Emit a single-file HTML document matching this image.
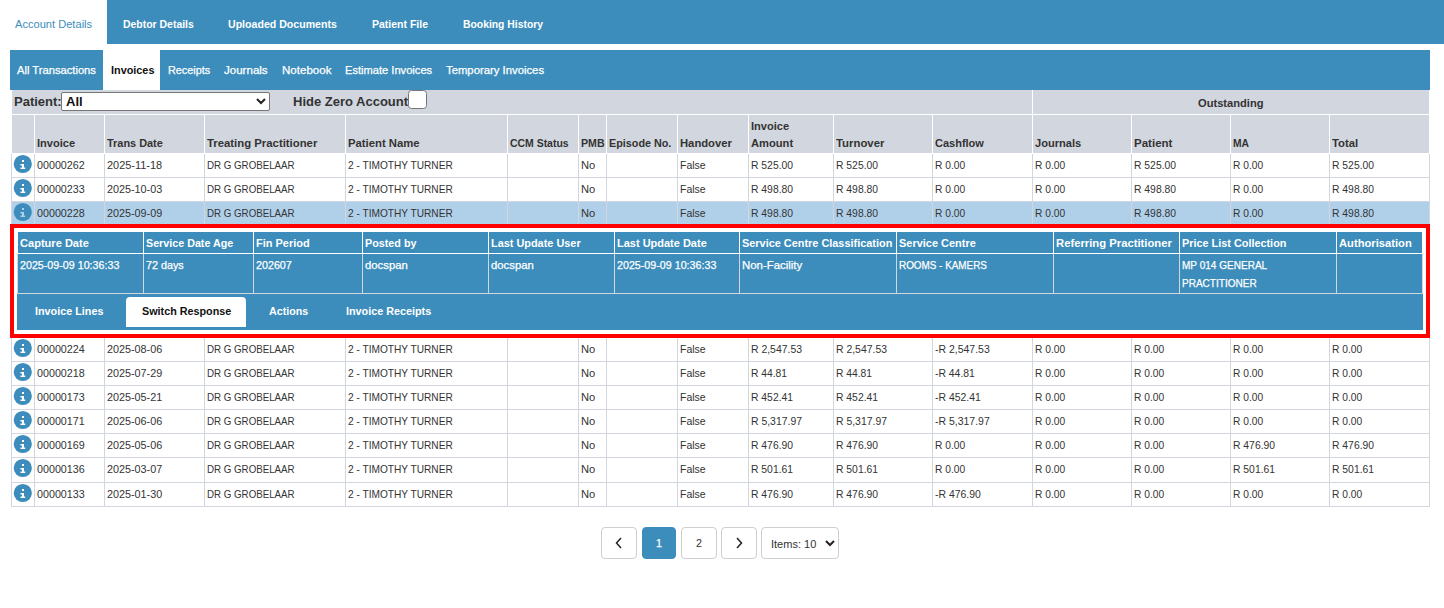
<!DOCTYPE html>
<html><head><meta charset="utf-8"><style>
html,body{margin:0;padding:0;background:#fff;}
body{width:1444px;height:608px;position:relative;overflow:hidden;font-family:"Liberation Sans",sans-serif;}
body>div,body>svg{position:absolute;}
.t{white-space:nowrap;transform-origin:0 0;}
</style></head><body>
<div style="left:107px;top:0px;width:1337px;height:44px;background:#3c8dbc;"></div>
<div class="t" style="left:15.00px;top:18.69px;font-size:11.0px;line-height:11.0px;font-weight:normal;color:#3c8dbc;transform:scaleX(1.0089)">Account Details</div>
<div class="t" style="left:122.50px;top:18.69px;font-size:11.0px;line-height:11.0px;font-weight:bold;color:#fff;transform:scaleX(0.9497)">Debtor Details</div>
<div class="t" style="left:228.00px;top:18.69px;font-size:11.0px;line-height:11.0px;font-weight:bold;color:#fff;transform:scaleX(0.9625)">Uploaded Documents</div>
<div class="t" style="left:372.00px;top:18.69px;font-size:11.0px;line-height:11.0px;font-weight:bold;color:#fff;transform:scaleX(0.9549)">Patient File</div>
<div class="t" style="left:462.80px;top:18.69px;font-size:11.0px;line-height:11.0px;font-weight:bold;color:#fff;transform:scaleX(0.9417)">Booking History</div>
<div style="left:10px;top:50px;width:1420px;height:40px;background:#3c8dbc;"></div>
<div style="left:103px;top:50px;width:57px;height:40px;background:#fff;"></div>
<div class="t" style="left:17.00px;top:64.69px;font-size:11.0px;line-height:11.0px;font-weight:normal;color:#fff;transform:scaleX(1.0166);-webkit-text-stroke:0.25px #fff">All Transactions</div>
<div class="t" style="left:110.50px;top:64.69px;font-size:11.0px;line-height:11.0px;font-weight:bold;color:#111;transform:scaleX(0.9868)">Invoices</div>
<div class="t" style="left:167.50px;top:64.69px;font-size:11.0px;line-height:11.0px;font-weight:normal;color:#fff;transform:scaleX(0.9860);-webkit-text-stroke:0.25px #fff">Receipts</div>
<div class="t" style="left:223.80px;top:64.69px;font-size:11.0px;line-height:11.0px;font-weight:normal;color:#fff;transform:scaleX(1.0497);-webkit-text-stroke:0.25px #fff">Journals</div>
<div class="t" style="left:281.50px;top:64.69px;font-size:11.0px;line-height:11.0px;font-weight:normal;color:#fff;transform:scaleX(1.0510);-webkit-text-stroke:0.25px #fff">Notebook</div>
<div class="t" style="left:345.00px;top:64.69px;font-size:11.0px;line-height:11.0px;font-weight:normal;color:#fff;transform:scaleX(1.0108);-webkit-text-stroke:0.25px #fff">Estimate Invoices</div>
<div class="t" style="left:446.00px;top:64.69px;font-size:11.0px;line-height:11.0px;font-weight:normal;color:#fff;transform:scaleX(1.0280);-webkit-text-stroke:0.25px #fff">Temporary Invoices</div>
<div style="left:12px;top:90px;width:1417px;height:63px;background:#d2d6de;"></div>
<div style="left:12px;top:114px;width:1417px;height:1px;background:#fff;"></div>
<div style="left:1032px;top:90px;width:1px;height:24px;background:#fff;"></div>
<div style="left:34px;top:115px;width:1px;height:38px;background:#fff;"></div>
<div style="left:104px;top:115px;width:1px;height:38px;background:#fff;"></div>
<div style="left:204px;top:115px;width:1px;height:38px;background:#fff;"></div>
<div style="left:345px;top:115px;width:1px;height:38px;background:#fff;"></div>
<div style="left:507px;top:115px;width:1px;height:38px;background:#fff;"></div>
<div style="left:578px;top:115px;width:1px;height:38px;background:#fff;"></div>
<div style="left:606px;top:115px;width:1px;height:38px;background:#fff;"></div>
<div style="left:677px;top:115px;width:1px;height:38px;background:#fff;"></div>
<div style="left:748px;top:115px;width:1px;height:38px;background:#fff;"></div>
<div style="left:833px;top:115px;width:1px;height:38px;background:#fff;"></div>
<div style="left:932px;top:115px;width:1px;height:38px;background:#fff;"></div>
<div style="left:1032px;top:115px;width:1px;height:38px;background:#fff;"></div>
<div style="left:1131px;top:115px;width:1px;height:38px;background:#fff;"></div>
<div style="left:1230px;top:115px;width:1px;height:38px;background:#fff;"></div>
<div style="left:1329px;top:115px;width:1px;height:38px;background:#fff;"></div>
<div class="t" style="left:14px;top:94px;font-size:13px;line-height:15px;font-weight:bold;color:#333">Patient:</div>
<div style="left:61px;top:92px;width:209px;height:19px;background:#fff;box-sizing:border-box;border:1px solid #767676;border-radius:2px;"></div>
<div class="t" style="left:66px;top:94px;font-size:13px;line-height:15px;font-weight:bold;color:#111">All</div>
<svg style="position:absolute;left:255px;top:97px" width="12" height="9" viewBox="0 0 12 9"><path d="M2 2 L6 6 L10 2" fill="none" stroke="#222" stroke-width="2"/></svg>
<div class="t" style="left:293px;top:94px;font-size:13px;line-height:15px;font-weight:bold;color:#333">Hide Zero Account</div>
<div style="left:408px;top:90px;width:19px;height:19px;background:#fff;box-sizing:border-box;border:1.8px solid #767676;border-radius:3.5px;"></div>
<div class="t" style="left:1197.71px;top:97.59px;font-size:11.0px;line-height:11.0px;font-weight:bold;color:#333;transform:scaleX(1.0124)">Outstanding</div>
<div class="t" style="left:37.00px;top:137.69px;font-size:11.0px;line-height:11.0px;font-weight:bold;color:#333;transform:scaleX(1.0059)">Invoice</div>
<div class="t" style="left:107.00px;top:137.69px;font-size:11.0px;line-height:11.0px;font-weight:bold;color:#333;transform:scaleX(0.9926)">Trans Date</div>
<div class="t" style="left:207.00px;top:137.69px;font-size:11.0px;line-height:11.0px;font-weight:bold;color:#333;transform:scaleX(1.0314)">Treating Practitioner</div>
<div class="t" style="left:348.00px;top:137.69px;font-size:11.0px;line-height:11.0px;font-weight:bold;color:#333;transform:scaleX(1.0280)">Patient Name</div>
<div class="t" style="left:510.00px;top:137.69px;font-size:11.0px;line-height:11.0px;font-weight:bold;color:#333;transform:scaleX(0.9491)">CCM Status</div>
<div class="t" style="left:581.00px;top:137.69px;font-size:11.0px;line-height:11.0px;font-weight:bold;color:#333;transform:scaleX(0.9637)">PMB</div>
<div class="t" style="left:609.00px;top:137.69px;font-size:11.0px;line-height:11.0px;font-weight:bold;color:#333;transform:scaleX(0.9809)">Episode No.</div>
<div class="t" style="left:680.00px;top:137.69px;font-size:11.0px;line-height:11.0px;font-weight:bold;color:#333;transform:scaleX(1.0226)">Handover</div>
<div class="t" style="left:751.00px;top:120.69px;font-size:11.0px;line-height:11.0px;font-weight:bold;color:#333;transform:scaleX(1.0059)">Invoice</div>
<div class="t" style="left:751.00px;top:137.69px;font-size:11.0px;line-height:11.0px;font-weight:bold;color:#333;transform:scaleX(1.0132)">Amount</div>
<div class="t" style="left:836.00px;top:137.69px;font-size:11.0px;line-height:11.0px;font-weight:bold;color:#333;transform:scaleX(1.0320)">Turnover</div>
<div class="t" style="left:935.00px;top:137.69px;font-size:11.0px;line-height:11.0px;font-weight:bold;color:#333;transform:scaleX(0.9996)">Cashflow</div>
<div class="t" style="left:1035.00px;top:137.69px;font-size:11.0px;line-height:11.0px;font-weight:bold;color:#333;transform:scaleX(1.0098)">Journals</div>
<div class="t" style="left:1134.00px;top:137.69px;font-size:11.0px;line-height:11.0px;font-weight:bold;color:#333;transform:scaleX(1.0481)">Patient</div>
<div class="t" style="left:1233.00px;top:137.69px;font-size:11.0px;line-height:11.0px;font-weight:bold;color:#333;transform:scaleX(0.9364)">MA</div>
<div class="t" style="left:1332.00px;top:137.69px;font-size:11.0px;line-height:11.0px;font-weight:bold;color:#333;transform:scaleX(1.0294)">Total</div>
<div style="left:11px;top:177px;width:1419px;height:1px;background:#d2d6de;"></div>
<div style="left:11px;top:154px;width:1px;height:24px;background:#d2d6de;"></div>
<div style="left:34px;top:154px;width:1px;height:24px;background:#d2d6de;"></div>
<div style="left:104px;top:154px;width:1px;height:24px;background:#d2d6de;"></div>
<div style="left:204px;top:154px;width:1px;height:24px;background:#d2d6de;"></div>
<div style="left:345px;top:154px;width:1px;height:24px;background:#d2d6de;"></div>
<div style="left:507px;top:154px;width:1px;height:24px;background:#d2d6de;"></div>
<div style="left:578px;top:154px;width:1px;height:24px;background:#d2d6de;"></div>
<div style="left:606px;top:154px;width:1px;height:24px;background:#d2d6de;"></div>
<div style="left:677px;top:154px;width:1px;height:24px;background:#d2d6de;"></div>
<div style="left:748px;top:154px;width:1px;height:24px;background:#d2d6de;"></div>
<div style="left:833px;top:154px;width:1px;height:24px;background:#d2d6de;"></div>
<div style="left:932px;top:154px;width:1px;height:24px;background:#d2d6de;"></div>
<div style="left:1032px;top:154px;width:1px;height:24px;background:#d2d6de;"></div>
<div style="left:1131px;top:154px;width:1px;height:24px;background:#d2d6de;"></div>
<div style="left:1230px;top:154px;width:1px;height:24px;background:#d2d6de;"></div>
<div style="left:1329px;top:154px;width:1px;height:24px;background:#d2d6de;"></div>
<div style="left:1429px;top:154px;width:1px;height:24px;background:#d2d6de;"></div>
<svg style="position:absolute;left:13px;top:154px" width="20" height="20" viewBox="0 0 20 20"><circle cx="9.8" cy="10" r="9.1" fill="#3c8dbc"/><rect x="9" y="6" width="2" height="2" fill="#fff"/><path d="M7.5 10 H11 V13.5 H12.2 V15 H7.5 V13.5 H9 V11.5 H7.5 Z" fill="#fff"/></svg>
<div class="t" style="left:37.00px;top:159.69px;font-size:11.0px;line-height:11.0px;font-weight:normal;color:#333;transform:scaleX(0.9749)">00000262</div>
<div class="t" style="left:107.00px;top:159.69px;font-size:11.0px;line-height:11.0px;font-weight:normal;color:#333;transform:scaleX(0.9951)">2025-11-18</div>
<div class="t" style="left:207.00px;top:159.69px;font-size:11.0px;line-height:11.0px;font-weight:normal;color:#333;transform:scaleX(0.8850)">DR G GROBELAAR</div>
<div class="t" style="left:348.00px;top:159.69px;font-size:11.0px;line-height:11.0px;font-weight:normal;color:#333;transform:scaleX(0.9217)">2 - TIMOTHY TURNER</div>
<div class="t" style="left:581.00px;top:159.69px;font-size:11.0px;line-height:11.0px;font-weight:normal;color:#333;transform:scaleX(1.0147)">No</div>
<div class="t" style="left:680.00px;top:159.69px;font-size:11.0px;line-height:11.0px;font-weight:normal;color:#333;transform:scaleX(0.9521)">False</div>
<div class="t" style="left:751.00px;top:159.69px;font-size:11.0px;line-height:11.0px;font-weight:normal;color:#333;transform:scaleX(0.9416)">R 525.00</div>
<div class="t" style="left:836.00px;top:159.69px;font-size:11.0px;line-height:11.0px;font-weight:normal;color:#333;transform:scaleX(0.9416)">R 525.00</div>
<div class="t" style="left:935.00px;top:159.69px;font-size:11.0px;line-height:11.0px;font-weight:normal;color:#333;transform:scaleX(0.9290)">R 0.00</div>
<div class="t" style="left:1035.00px;top:159.69px;font-size:11.0px;line-height:11.0px;font-weight:normal;color:#333;transform:scaleX(0.9290)">R 0.00</div>
<div class="t" style="left:1134.00px;top:159.69px;font-size:11.0px;line-height:11.0px;font-weight:normal;color:#333;transform:scaleX(0.9416)">R 525.00</div>
<div class="t" style="left:1233.00px;top:159.69px;font-size:11.0px;line-height:11.0px;font-weight:normal;color:#333;transform:scaleX(0.9290)">R 0.00</div>
<div class="t" style="left:1332.00px;top:159.69px;font-size:11.0px;line-height:11.0px;font-weight:normal;color:#333;transform:scaleX(0.9416)">R 525.00</div>
<div style="left:11px;top:201px;width:1419px;height:1px;background:#d2d6de;"></div>
<div style="left:11px;top:177px;width:1px;height:25px;background:#d2d6de;"></div>
<div style="left:34px;top:177px;width:1px;height:25px;background:#d2d6de;"></div>
<div style="left:104px;top:177px;width:1px;height:25px;background:#d2d6de;"></div>
<div style="left:204px;top:177px;width:1px;height:25px;background:#d2d6de;"></div>
<div style="left:345px;top:177px;width:1px;height:25px;background:#d2d6de;"></div>
<div style="left:507px;top:177px;width:1px;height:25px;background:#d2d6de;"></div>
<div style="left:578px;top:177px;width:1px;height:25px;background:#d2d6de;"></div>
<div style="left:606px;top:177px;width:1px;height:25px;background:#d2d6de;"></div>
<div style="left:677px;top:177px;width:1px;height:25px;background:#d2d6de;"></div>
<div style="left:748px;top:177px;width:1px;height:25px;background:#d2d6de;"></div>
<div style="left:833px;top:177px;width:1px;height:25px;background:#d2d6de;"></div>
<div style="left:932px;top:177px;width:1px;height:25px;background:#d2d6de;"></div>
<div style="left:1032px;top:177px;width:1px;height:25px;background:#d2d6de;"></div>
<div style="left:1131px;top:177px;width:1px;height:25px;background:#d2d6de;"></div>
<div style="left:1230px;top:177px;width:1px;height:25px;background:#d2d6de;"></div>
<div style="left:1329px;top:177px;width:1px;height:25px;background:#d2d6de;"></div>
<div style="left:1429px;top:177px;width:1px;height:25px;background:#d2d6de;"></div>
<svg style="position:absolute;left:13px;top:178px" width="20" height="20" viewBox="0 0 20 20"><circle cx="9.8" cy="10" r="9.1" fill="#3c8dbc"/><rect x="9" y="6" width="2" height="2" fill="#fff"/><path d="M7.5 10 H11 V13.5 H12.2 V15 H7.5 V13.5 H9 V11.5 H7.5 Z" fill="#fff"/></svg>
<div class="t" style="left:37.00px;top:183.69px;font-size:11.0px;line-height:11.0px;font-weight:normal;color:#333;transform:scaleX(0.9749)">00000233</div>
<div class="t" style="left:107.00px;top:183.69px;font-size:11.0px;line-height:11.0px;font-weight:normal;color:#333;transform:scaleX(0.9806)">2025-10-03</div>
<div class="t" style="left:207.00px;top:183.69px;font-size:11.0px;line-height:11.0px;font-weight:normal;color:#333;transform:scaleX(0.8850)">DR G GROBELAAR</div>
<div class="t" style="left:348.00px;top:183.69px;font-size:11.0px;line-height:11.0px;font-weight:normal;color:#333;transform:scaleX(0.9217)">2 - TIMOTHY TURNER</div>
<div class="t" style="left:581.00px;top:183.69px;font-size:11.0px;line-height:11.0px;font-weight:normal;color:#333;transform:scaleX(1.0147)">No</div>
<div class="t" style="left:680.00px;top:183.69px;font-size:11.0px;line-height:11.0px;font-weight:normal;color:#333;transform:scaleX(0.9521)">False</div>
<div class="t" style="left:751.00px;top:183.69px;font-size:11.0px;line-height:11.0px;font-weight:normal;color:#333;transform:scaleX(0.9416)">R 498.80</div>
<div class="t" style="left:836.00px;top:183.69px;font-size:11.0px;line-height:11.0px;font-weight:normal;color:#333;transform:scaleX(0.9416)">R 498.80</div>
<div class="t" style="left:935.00px;top:183.69px;font-size:11.0px;line-height:11.0px;font-weight:normal;color:#333;transform:scaleX(0.9290)">R 0.00</div>
<div class="t" style="left:1035.00px;top:183.69px;font-size:11.0px;line-height:11.0px;font-weight:normal;color:#333;transform:scaleX(0.9290)">R 0.00</div>
<div class="t" style="left:1134.00px;top:183.69px;font-size:11.0px;line-height:11.0px;font-weight:normal;color:#333;transform:scaleX(0.9416)">R 498.80</div>
<div class="t" style="left:1233.00px;top:183.69px;font-size:11.0px;line-height:11.0px;font-weight:normal;color:#333;transform:scaleX(0.9290)">R 0.00</div>
<div class="t" style="left:1332.00px;top:183.69px;font-size:11.0px;line-height:11.0px;font-weight:normal;color:#333;transform:scaleX(0.9416)">R 498.80</div>
<div style="left:12px;top:202px;width:1417px;height:23px;background:#b0d0ea;"></div>
<div style="left:11px;top:225px;width:1419px;height:1px;background:#d2d6de;"></div>
<div style="left:11px;top:201px;width:1px;height:25px;background:#d2d6de;"></div>
<div style="left:34px;top:201px;width:1px;height:25px;background:#d2d6de;"></div>
<div style="left:104px;top:201px;width:1px;height:25px;background:#d2d6de;"></div>
<div style="left:204px;top:201px;width:1px;height:25px;background:#d2d6de;"></div>
<div style="left:345px;top:201px;width:1px;height:25px;background:#d2d6de;"></div>
<div style="left:507px;top:201px;width:1px;height:25px;background:#d2d6de;"></div>
<div style="left:578px;top:201px;width:1px;height:25px;background:#d2d6de;"></div>
<div style="left:606px;top:201px;width:1px;height:25px;background:#d2d6de;"></div>
<div style="left:677px;top:201px;width:1px;height:25px;background:#d2d6de;"></div>
<div style="left:748px;top:201px;width:1px;height:25px;background:#d2d6de;"></div>
<div style="left:833px;top:201px;width:1px;height:25px;background:#d2d6de;"></div>
<div style="left:932px;top:201px;width:1px;height:25px;background:#d2d6de;"></div>
<div style="left:1032px;top:201px;width:1px;height:25px;background:#d2d6de;"></div>
<div style="left:1131px;top:201px;width:1px;height:25px;background:#d2d6de;"></div>
<div style="left:1230px;top:201px;width:1px;height:25px;background:#d2d6de;"></div>
<div style="left:1329px;top:201px;width:1px;height:25px;background:#d2d6de;"></div>
<div style="left:1429px;top:201px;width:1px;height:25px;background:#d2d6de;"></div>
<svg style="position:absolute;left:13px;top:202px" width="20" height="20" viewBox="0 0 20 20"><circle cx="9.8" cy="10" r="9.1" fill="#3c8dbc"/><rect x="9" y="6" width="2" height="2" fill="#b0d0ea"/><path d="M7.5 10 H11 V13.5 H12.2 V15 H7.5 V13.5 H9 V11.5 H7.5 Z" fill="#b0d0ea"/></svg>
<div class="t" style="left:37.00px;top:207.69px;font-size:11.0px;line-height:11.0px;font-weight:normal;color:#333;transform:scaleX(0.9749)">00000228</div>
<div class="t" style="left:107.00px;top:207.69px;font-size:11.0px;line-height:11.0px;font-weight:normal;color:#333;transform:scaleX(0.9806)">2025-09-09</div>
<div class="t" style="left:207.00px;top:207.69px;font-size:11.0px;line-height:11.0px;font-weight:normal;color:#333;transform:scaleX(0.8850)">DR G GROBELAAR</div>
<div class="t" style="left:348.00px;top:207.69px;font-size:11.0px;line-height:11.0px;font-weight:normal;color:#333;transform:scaleX(0.9217)">2 - TIMOTHY TURNER</div>
<div class="t" style="left:581.00px;top:207.69px;font-size:11.0px;line-height:11.0px;font-weight:normal;color:#333;transform:scaleX(1.0147)">No</div>
<div class="t" style="left:680.00px;top:207.69px;font-size:11.0px;line-height:11.0px;font-weight:normal;color:#333;transform:scaleX(0.9521)">False</div>
<div class="t" style="left:751.00px;top:207.69px;font-size:11.0px;line-height:11.0px;font-weight:normal;color:#333;transform:scaleX(0.9416)">R 498.80</div>
<div class="t" style="left:836.00px;top:207.69px;font-size:11.0px;line-height:11.0px;font-weight:normal;color:#333;transform:scaleX(0.9416)">R 498.80</div>
<div class="t" style="left:935.00px;top:207.69px;font-size:11.0px;line-height:11.0px;font-weight:normal;color:#333;transform:scaleX(0.9290)">R 0.00</div>
<div class="t" style="left:1035.00px;top:207.69px;font-size:11.0px;line-height:11.0px;font-weight:normal;color:#333;transform:scaleX(0.9290)">R 0.00</div>
<div class="t" style="left:1134.00px;top:207.69px;font-size:11.0px;line-height:11.0px;font-weight:normal;color:#333;transform:scaleX(0.9416)">R 498.80</div>
<div class="t" style="left:1233.00px;top:207.69px;font-size:11.0px;line-height:11.0px;font-weight:normal;color:#333;transform:scaleX(0.9290)">R 0.00</div>
<div class="t" style="left:1332.00px;top:207.69px;font-size:11.0px;line-height:11.0px;font-weight:normal;color:#333;transform:scaleX(0.9416)">R 498.80</div>
<div style="left:11px;top:361px;width:1419px;height:1px;background:#d2d6de;"></div>
<div style="left:11px;top:337px;width:1px;height:25px;background:#d2d6de;"></div>
<div style="left:34px;top:337px;width:1px;height:25px;background:#d2d6de;"></div>
<div style="left:104px;top:337px;width:1px;height:25px;background:#d2d6de;"></div>
<div style="left:204px;top:337px;width:1px;height:25px;background:#d2d6de;"></div>
<div style="left:345px;top:337px;width:1px;height:25px;background:#d2d6de;"></div>
<div style="left:507px;top:337px;width:1px;height:25px;background:#d2d6de;"></div>
<div style="left:578px;top:337px;width:1px;height:25px;background:#d2d6de;"></div>
<div style="left:606px;top:337px;width:1px;height:25px;background:#d2d6de;"></div>
<div style="left:677px;top:337px;width:1px;height:25px;background:#d2d6de;"></div>
<div style="left:748px;top:337px;width:1px;height:25px;background:#d2d6de;"></div>
<div style="left:833px;top:337px;width:1px;height:25px;background:#d2d6de;"></div>
<div style="left:932px;top:337px;width:1px;height:25px;background:#d2d6de;"></div>
<div style="left:1032px;top:337px;width:1px;height:25px;background:#d2d6de;"></div>
<div style="left:1131px;top:337px;width:1px;height:25px;background:#d2d6de;"></div>
<div style="left:1230px;top:337px;width:1px;height:25px;background:#d2d6de;"></div>
<div style="left:1329px;top:337px;width:1px;height:25px;background:#d2d6de;"></div>
<div style="left:1429px;top:337px;width:1px;height:25px;background:#d2d6de;"></div>
<svg style="position:absolute;left:13px;top:338px" width="20" height="20" viewBox="0 0 20 20"><circle cx="9.8" cy="10" r="9.1" fill="#3c8dbc"/><rect x="9" y="6" width="2" height="2" fill="#fff"/><path d="M7.5 10 H11 V13.5 H12.2 V15 H7.5 V13.5 H9 V11.5 H7.5 Z" fill="#fff"/></svg>
<div class="t" style="left:37.00px;top:343.69px;font-size:11.0px;line-height:11.0px;font-weight:normal;color:#333;transform:scaleX(0.9749)">00000224</div>
<div class="t" style="left:107.00px;top:343.69px;font-size:11.0px;line-height:11.0px;font-weight:normal;color:#333;transform:scaleX(0.9806)">2025-08-06</div>
<div class="t" style="left:207.00px;top:343.69px;font-size:11.0px;line-height:11.0px;font-weight:normal;color:#333;transform:scaleX(0.8850)">DR G GROBELAAR</div>
<div class="t" style="left:348.00px;top:343.69px;font-size:11.0px;line-height:11.0px;font-weight:normal;color:#333;transform:scaleX(0.9217)">2 - TIMOTHY TURNER</div>
<div class="t" style="left:581.00px;top:343.69px;font-size:11.0px;line-height:11.0px;font-weight:normal;color:#333;transform:scaleX(1.0147)">No</div>
<div class="t" style="left:680.00px;top:343.69px;font-size:11.0px;line-height:11.0px;font-weight:normal;color:#333;transform:scaleX(0.9521)">False</div>
<div class="t" style="left:751.00px;top:343.69px;font-size:11.0px;line-height:11.0px;font-weight:normal;color:#333;transform:scaleX(0.9474)">R 2,547.53</div>
<div class="t" style="left:836.00px;top:343.69px;font-size:11.0px;line-height:11.0px;font-weight:normal;color:#333;transform:scaleX(0.9474)">R 2,547.53</div>
<div class="t" style="left:935.00px;top:343.69px;font-size:11.0px;line-height:11.0px;font-weight:normal;color:#333;transform:scaleX(0.9520)">-R 2,547.53</div>
<div class="t" style="left:1035.00px;top:343.69px;font-size:11.0px;line-height:11.0px;font-weight:normal;color:#333;transform:scaleX(0.9290)">R 0.00</div>
<div class="t" style="left:1134.00px;top:343.69px;font-size:11.0px;line-height:11.0px;font-weight:normal;color:#333;transform:scaleX(0.9290)">R 0.00</div>
<div class="t" style="left:1233.00px;top:343.69px;font-size:11.0px;line-height:11.0px;font-weight:normal;color:#333;transform:scaleX(0.9290)">R 0.00</div>
<div class="t" style="left:1332.00px;top:343.69px;font-size:11.0px;line-height:11.0px;font-weight:normal;color:#333;transform:scaleX(0.9290)">R 0.00</div>
<div style="left:11px;top:385px;width:1419px;height:1px;background:#d2d6de;"></div>
<div style="left:11px;top:361px;width:1px;height:25px;background:#d2d6de;"></div>
<div style="left:34px;top:361px;width:1px;height:25px;background:#d2d6de;"></div>
<div style="left:104px;top:361px;width:1px;height:25px;background:#d2d6de;"></div>
<div style="left:204px;top:361px;width:1px;height:25px;background:#d2d6de;"></div>
<div style="left:345px;top:361px;width:1px;height:25px;background:#d2d6de;"></div>
<div style="left:507px;top:361px;width:1px;height:25px;background:#d2d6de;"></div>
<div style="left:578px;top:361px;width:1px;height:25px;background:#d2d6de;"></div>
<div style="left:606px;top:361px;width:1px;height:25px;background:#d2d6de;"></div>
<div style="left:677px;top:361px;width:1px;height:25px;background:#d2d6de;"></div>
<div style="left:748px;top:361px;width:1px;height:25px;background:#d2d6de;"></div>
<div style="left:833px;top:361px;width:1px;height:25px;background:#d2d6de;"></div>
<div style="left:932px;top:361px;width:1px;height:25px;background:#d2d6de;"></div>
<div style="left:1032px;top:361px;width:1px;height:25px;background:#d2d6de;"></div>
<div style="left:1131px;top:361px;width:1px;height:25px;background:#d2d6de;"></div>
<div style="left:1230px;top:361px;width:1px;height:25px;background:#d2d6de;"></div>
<div style="left:1329px;top:361px;width:1px;height:25px;background:#d2d6de;"></div>
<div style="left:1429px;top:361px;width:1px;height:25px;background:#d2d6de;"></div>
<svg style="position:absolute;left:13px;top:362px" width="20" height="20" viewBox="0 0 20 20"><circle cx="9.8" cy="10" r="9.1" fill="#3c8dbc"/><rect x="9" y="6" width="2" height="2" fill="#fff"/><path d="M7.5 10 H11 V13.5 H12.2 V15 H7.5 V13.5 H9 V11.5 H7.5 Z" fill="#fff"/></svg>
<div class="t" style="left:37.00px;top:367.69px;font-size:11.0px;line-height:11.0px;font-weight:normal;color:#333;transform:scaleX(0.9749)">00000218</div>
<div class="t" style="left:107.00px;top:367.69px;font-size:11.0px;line-height:11.0px;font-weight:normal;color:#333;transform:scaleX(0.9806)">2025-07-29</div>
<div class="t" style="left:207.00px;top:367.69px;font-size:11.0px;line-height:11.0px;font-weight:normal;color:#333;transform:scaleX(0.8850)">DR G GROBELAAR</div>
<div class="t" style="left:348.00px;top:367.69px;font-size:11.0px;line-height:11.0px;font-weight:normal;color:#333;transform:scaleX(0.9217)">2 - TIMOTHY TURNER</div>
<div class="t" style="left:581.00px;top:367.69px;font-size:11.0px;line-height:11.0px;font-weight:normal;color:#333;transform:scaleX(1.0147)">No</div>
<div class="t" style="left:680.00px;top:367.69px;font-size:11.0px;line-height:11.0px;font-weight:normal;color:#333;transform:scaleX(0.9521)">False</div>
<div class="t" style="left:751.00px;top:367.69px;font-size:11.0px;line-height:11.0px;font-weight:normal;color:#333;transform:scaleX(0.9363)">R 44.81</div>
<div class="t" style="left:836.00px;top:367.69px;font-size:11.0px;line-height:11.0px;font-weight:normal;color:#333;transform:scaleX(0.9363)">R 44.81</div>
<div class="t" style="left:935.00px;top:367.69px;font-size:11.0px;line-height:11.0px;font-weight:normal;color:#333;transform:scaleX(0.9435)">-R 44.81</div>
<div class="t" style="left:1035.00px;top:367.69px;font-size:11.0px;line-height:11.0px;font-weight:normal;color:#333;transform:scaleX(0.9290)">R 0.00</div>
<div class="t" style="left:1134.00px;top:367.69px;font-size:11.0px;line-height:11.0px;font-weight:normal;color:#333;transform:scaleX(0.9290)">R 0.00</div>
<div class="t" style="left:1233.00px;top:367.69px;font-size:11.0px;line-height:11.0px;font-weight:normal;color:#333;transform:scaleX(0.9290)">R 0.00</div>
<div class="t" style="left:1332.00px;top:367.69px;font-size:11.0px;line-height:11.0px;font-weight:normal;color:#333;transform:scaleX(0.9290)">R 0.00</div>
<div style="left:11px;top:409px;width:1419px;height:1px;background:#d2d6de;"></div>
<div style="left:11px;top:385px;width:1px;height:25px;background:#d2d6de;"></div>
<div style="left:34px;top:385px;width:1px;height:25px;background:#d2d6de;"></div>
<div style="left:104px;top:385px;width:1px;height:25px;background:#d2d6de;"></div>
<div style="left:204px;top:385px;width:1px;height:25px;background:#d2d6de;"></div>
<div style="left:345px;top:385px;width:1px;height:25px;background:#d2d6de;"></div>
<div style="left:507px;top:385px;width:1px;height:25px;background:#d2d6de;"></div>
<div style="left:578px;top:385px;width:1px;height:25px;background:#d2d6de;"></div>
<div style="left:606px;top:385px;width:1px;height:25px;background:#d2d6de;"></div>
<div style="left:677px;top:385px;width:1px;height:25px;background:#d2d6de;"></div>
<div style="left:748px;top:385px;width:1px;height:25px;background:#d2d6de;"></div>
<div style="left:833px;top:385px;width:1px;height:25px;background:#d2d6de;"></div>
<div style="left:932px;top:385px;width:1px;height:25px;background:#d2d6de;"></div>
<div style="left:1032px;top:385px;width:1px;height:25px;background:#d2d6de;"></div>
<div style="left:1131px;top:385px;width:1px;height:25px;background:#d2d6de;"></div>
<div style="left:1230px;top:385px;width:1px;height:25px;background:#d2d6de;"></div>
<div style="left:1329px;top:385px;width:1px;height:25px;background:#d2d6de;"></div>
<div style="left:1429px;top:385px;width:1px;height:25px;background:#d2d6de;"></div>
<svg style="position:absolute;left:13px;top:386px" width="20" height="20" viewBox="0 0 20 20"><circle cx="9.8" cy="10" r="9.1" fill="#3c8dbc"/><rect x="9" y="6" width="2" height="2" fill="#fff"/><path d="M7.5 10 H11 V13.5 H12.2 V15 H7.5 V13.5 H9 V11.5 H7.5 Z" fill="#fff"/></svg>
<div class="t" style="left:37.00px;top:391.69px;font-size:11.0px;line-height:11.0px;font-weight:normal;color:#333;transform:scaleX(0.9749)">00000173</div>
<div class="t" style="left:107.00px;top:391.69px;font-size:11.0px;line-height:11.0px;font-weight:normal;color:#333;transform:scaleX(0.9806)">2025-05-21</div>
<div class="t" style="left:207.00px;top:391.69px;font-size:11.0px;line-height:11.0px;font-weight:normal;color:#333;transform:scaleX(0.8850)">DR G GROBELAAR</div>
<div class="t" style="left:348.00px;top:391.69px;font-size:11.0px;line-height:11.0px;font-weight:normal;color:#333;transform:scaleX(0.9217)">2 - TIMOTHY TURNER</div>
<div class="t" style="left:581.00px;top:391.69px;font-size:11.0px;line-height:11.0px;font-weight:normal;color:#333;transform:scaleX(1.0147)">No</div>
<div class="t" style="left:680.00px;top:391.69px;font-size:11.0px;line-height:11.0px;font-weight:normal;color:#333;transform:scaleX(0.9521)">False</div>
<div class="t" style="left:751.00px;top:391.69px;font-size:11.0px;line-height:11.0px;font-weight:normal;color:#333;transform:scaleX(0.9416)">R 452.41</div>
<div class="t" style="left:836.00px;top:391.69px;font-size:11.0px;line-height:11.0px;font-weight:normal;color:#333;transform:scaleX(0.9416)">R 452.41</div>
<div class="t" style="left:935.00px;top:391.69px;font-size:11.0px;line-height:11.0px;font-weight:normal;color:#333;transform:scaleX(0.9474)">-R 452.41</div>
<div class="t" style="left:1035.00px;top:391.69px;font-size:11.0px;line-height:11.0px;font-weight:normal;color:#333;transform:scaleX(0.9290)">R 0.00</div>
<div class="t" style="left:1134.00px;top:391.69px;font-size:11.0px;line-height:11.0px;font-weight:normal;color:#333;transform:scaleX(0.9290)">R 0.00</div>
<div class="t" style="left:1233.00px;top:391.69px;font-size:11.0px;line-height:11.0px;font-weight:normal;color:#333;transform:scaleX(0.9290)">R 0.00</div>
<div class="t" style="left:1332.00px;top:391.69px;font-size:11.0px;line-height:11.0px;font-weight:normal;color:#333;transform:scaleX(0.9290)">R 0.00</div>
<div style="left:11px;top:433px;width:1419px;height:1px;background:#d2d6de;"></div>
<div style="left:11px;top:409px;width:1px;height:25px;background:#d2d6de;"></div>
<div style="left:34px;top:409px;width:1px;height:25px;background:#d2d6de;"></div>
<div style="left:104px;top:409px;width:1px;height:25px;background:#d2d6de;"></div>
<div style="left:204px;top:409px;width:1px;height:25px;background:#d2d6de;"></div>
<div style="left:345px;top:409px;width:1px;height:25px;background:#d2d6de;"></div>
<div style="left:507px;top:409px;width:1px;height:25px;background:#d2d6de;"></div>
<div style="left:578px;top:409px;width:1px;height:25px;background:#d2d6de;"></div>
<div style="left:606px;top:409px;width:1px;height:25px;background:#d2d6de;"></div>
<div style="left:677px;top:409px;width:1px;height:25px;background:#d2d6de;"></div>
<div style="left:748px;top:409px;width:1px;height:25px;background:#d2d6de;"></div>
<div style="left:833px;top:409px;width:1px;height:25px;background:#d2d6de;"></div>
<div style="left:932px;top:409px;width:1px;height:25px;background:#d2d6de;"></div>
<div style="left:1032px;top:409px;width:1px;height:25px;background:#d2d6de;"></div>
<div style="left:1131px;top:409px;width:1px;height:25px;background:#d2d6de;"></div>
<div style="left:1230px;top:409px;width:1px;height:25px;background:#d2d6de;"></div>
<div style="left:1329px;top:409px;width:1px;height:25px;background:#d2d6de;"></div>
<div style="left:1429px;top:409px;width:1px;height:25px;background:#d2d6de;"></div>
<svg style="position:absolute;left:13px;top:410px" width="20" height="20" viewBox="0 0 20 20"><circle cx="9.8" cy="10" r="9.1" fill="#3c8dbc"/><rect x="9" y="6" width="2" height="2" fill="#fff"/><path d="M7.5 10 H11 V13.5 H12.2 V15 H7.5 V13.5 H9 V11.5 H7.5 Z" fill="#fff"/></svg>
<div class="t" style="left:37.00px;top:415.69px;font-size:11.0px;line-height:11.0px;font-weight:normal;color:#333;transform:scaleX(0.9749)">00000171</div>
<div class="t" style="left:107.00px;top:415.69px;font-size:11.0px;line-height:11.0px;font-weight:normal;color:#333;transform:scaleX(0.9806)">2025-06-06</div>
<div class="t" style="left:207.00px;top:415.69px;font-size:11.0px;line-height:11.0px;font-weight:normal;color:#333;transform:scaleX(0.8850)">DR G GROBELAAR</div>
<div class="t" style="left:348.00px;top:415.69px;font-size:11.0px;line-height:11.0px;font-weight:normal;color:#333;transform:scaleX(0.9217)">2 - TIMOTHY TURNER</div>
<div class="t" style="left:581.00px;top:415.69px;font-size:11.0px;line-height:11.0px;font-weight:normal;color:#333;transform:scaleX(1.0147)">No</div>
<div class="t" style="left:680.00px;top:415.69px;font-size:11.0px;line-height:11.0px;font-weight:normal;color:#333;transform:scaleX(0.9521)">False</div>
<div class="t" style="left:751.00px;top:415.69px;font-size:11.0px;line-height:11.0px;font-weight:normal;color:#333;transform:scaleX(0.9474)">R 5,317.97</div>
<div class="t" style="left:836.00px;top:415.69px;font-size:11.0px;line-height:11.0px;font-weight:normal;color:#333;transform:scaleX(0.9474)">R 5,317.97</div>
<div class="t" style="left:935.00px;top:415.69px;font-size:11.0px;line-height:11.0px;font-weight:normal;color:#333;transform:scaleX(0.9520)">-R 5,317.97</div>
<div class="t" style="left:1035.00px;top:415.69px;font-size:11.0px;line-height:11.0px;font-weight:normal;color:#333;transform:scaleX(0.9290)">R 0.00</div>
<div class="t" style="left:1134.00px;top:415.69px;font-size:11.0px;line-height:11.0px;font-weight:normal;color:#333;transform:scaleX(0.9290)">R 0.00</div>
<div class="t" style="left:1233.00px;top:415.69px;font-size:11.0px;line-height:11.0px;font-weight:normal;color:#333;transform:scaleX(0.9290)">R 0.00</div>
<div class="t" style="left:1332.00px;top:415.69px;font-size:11.0px;line-height:11.0px;font-weight:normal;color:#333;transform:scaleX(0.9290)">R 0.00</div>
<div style="left:11px;top:457px;width:1419px;height:1px;background:#d2d6de;"></div>
<div style="left:11px;top:433px;width:1px;height:25px;background:#d2d6de;"></div>
<div style="left:34px;top:433px;width:1px;height:25px;background:#d2d6de;"></div>
<div style="left:104px;top:433px;width:1px;height:25px;background:#d2d6de;"></div>
<div style="left:204px;top:433px;width:1px;height:25px;background:#d2d6de;"></div>
<div style="left:345px;top:433px;width:1px;height:25px;background:#d2d6de;"></div>
<div style="left:507px;top:433px;width:1px;height:25px;background:#d2d6de;"></div>
<div style="left:578px;top:433px;width:1px;height:25px;background:#d2d6de;"></div>
<div style="left:606px;top:433px;width:1px;height:25px;background:#d2d6de;"></div>
<div style="left:677px;top:433px;width:1px;height:25px;background:#d2d6de;"></div>
<div style="left:748px;top:433px;width:1px;height:25px;background:#d2d6de;"></div>
<div style="left:833px;top:433px;width:1px;height:25px;background:#d2d6de;"></div>
<div style="left:932px;top:433px;width:1px;height:25px;background:#d2d6de;"></div>
<div style="left:1032px;top:433px;width:1px;height:25px;background:#d2d6de;"></div>
<div style="left:1131px;top:433px;width:1px;height:25px;background:#d2d6de;"></div>
<div style="left:1230px;top:433px;width:1px;height:25px;background:#d2d6de;"></div>
<div style="left:1329px;top:433px;width:1px;height:25px;background:#d2d6de;"></div>
<div style="left:1429px;top:433px;width:1px;height:25px;background:#d2d6de;"></div>
<svg style="position:absolute;left:13px;top:434px" width="20" height="20" viewBox="0 0 20 20"><circle cx="9.8" cy="10" r="9.1" fill="#3c8dbc"/><rect x="9" y="6" width="2" height="2" fill="#fff"/><path d="M7.5 10 H11 V13.5 H12.2 V15 H7.5 V13.5 H9 V11.5 H7.5 Z" fill="#fff"/></svg>
<div class="t" style="left:37.00px;top:439.69px;font-size:11.0px;line-height:11.0px;font-weight:normal;color:#333;transform:scaleX(0.9749)">00000169</div>
<div class="t" style="left:107.00px;top:439.69px;font-size:11.0px;line-height:11.0px;font-weight:normal;color:#333;transform:scaleX(0.9806)">2025-05-06</div>
<div class="t" style="left:207.00px;top:439.69px;font-size:11.0px;line-height:11.0px;font-weight:normal;color:#333;transform:scaleX(0.8850)">DR G GROBELAAR</div>
<div class="t" style="left:348.00px;top:439.69px;font-size:11.0px;line-height:11.0px;font-weight:normal;color:#333;transform:scaleX(0.9217)">2 - TIMOTHY TURNER</div>
<div class="t" style="left:581.00px;top:439.69px;font-size:11.0px;line-height:11.0px;font-weight:normal;color:#333;transform:scaleX(1.0147)">No</div>
<div class="t" style="left:680.00px;top:439.69px;font-size:11.0px;line-height:11.0px;font-weight:normal;color:#333;transform:scaleX(0.9521)">False</div>
<div class="t" style="left:751.00px;top:439.69px;font-size:11.0px;line-height:11.0px;font-weight:normal;color:#333;transform:scaleX(0.9416)">R 476.90</div>
<div class="t" style="left:836.00px;top:439.69px;font-size:11.0px;line-height:11.0px;font-weight:normal;color:#333;transform:scaleX(0.9416)">R 476.90</div>
<div class="t" style="left:935.00px;top:439.69px;font-size:11.0px;line-height:11.0px;font-weight:normal;color:#333;transform:scaleX(0.9290)">R 0.00</div>
<div class="t" style="left:1035.00px;top:439.69px;font-size:11.0px;line-height:11.0px;font-weight:normal;color:#333;transform:scaleX(0.9290)">R 0.00</div>
<div class="t" style="left:1134.00px;top:439.69px;font-size:11.0px;line-height:11.0px;font-weight:normal;color:#333;transform:scaleX(0.9290)">R 0.00</div>
<div class="t" style="left:1233.00px;top:439.69px;font-size:11.0px;line-height:11.0px;font-weight:normal;color:#333;transform:scaleX(0.9416)">R 476.90</div>
<div class="t" style="left:1332.00px;top:439.69px;font-size:11.0px;line-height:11.0px;font-weight:normal;color:#333;transform:scaleX(0.9416)">R 476.90</div>
<div style="left:11px;top:482px;width:1419px;height:1px;background:#d2d6de;"></div>
<div style="left:11px;top:457px;width:1px;height:26px;background:#d2d6de;"></div>
<div style="left:34px;top:457px;width:1px;height:26px;background:#d2d6de;"></div>
<div style="left:104px;top:457px;width:1px;height:26px;background:#d2d6de;"></div>
<div style="left:204px;top:457px;width:1px;height:26px;background:#d2d6de;"></div>
<div style="left:345px;top:457px;width:1px;height:26px;background:#d2d6de;"></div>
<div style="left:507px;top:457px;width:1px;height:26px;background:#d2d6de;"></div>
<div style="left:578px;top:457px;width:1px;height:26px;background:#d2d6de;"></div>
<div style="left:606px;top:457px;width:1px;height:26px;background:#d2d6de;"></div>
<div style="left:677px;top:457px;width:1px;height:26px;background:#d2d6de;"></div>
<div style="left:748px;top:457px;width:1px;height:26px;background:#d2d6de;"></div>
<div style="left:833px;top:457px;width:1px;height:26px;background:#d2d6de;"></div>
<div style="left:932px;top:457px;width:1px;height:26px;background:#d2d6de;"></div>
<div style="left:1032px;top:457px;width:1px;height:26px;background:#d2d6de;"></div>
<div style="left:1131px;top:457px;width:1px;height:26px;background:#d2d6de;"></div>
<div style="left:1230px;top:457px;width:1px;height:26px;background:#d2d6de;"></div>
<div style="left:1329px;top:457px;width:1px;height:26px;background:#d2d6de;"></div>
<div style="left:1429px;top:457px;width:1px;height:26px;background:#d2d6de;"></div>
<svg style="position:absolute;left:13px;top:458px" width="20" height="20" viewBox="0 0 20 20"><circle cx="9.8" cy="10" r="9.1" fill="#3c8dbc"/><rect x="9" y="6" width="2" height="2" fill="#fff"/><path d="M7.5 10 H11 V13.5 H12.2 V15 H7.5 V13.5 H9 V11.5 H7.5 Z" fill="#fff"/></svg>
<div class="t" style="left:37.00px;top:463.69px;font-size:11.0px;line-height:11.0px;font-weight:normal;color:#333;transform:scaleX(0.9749)">00000136</div>
<div class="t" style="left:107.00px;top:463.69px;font-size:11.0px;line-height:11.0px;font-weight:normal;color:#333;transform:scaleX(0.9806)">2025-03-07</div>
<div class="t" style="left:207.00px;top:463.69px;font-size:11.0px;line-height:11.0px;font-weight:normal;color:#333;transform:scaleX(0.8850)">DR G GROBELAAR</div>
<div class="t" style="left:348.00px;top:463.69px;font-size:11.0px;line-height:11.0px;font-weight:normal;color:#333;transform:scaleX(0.9217)">2 - TIMOTHY TURNER</div>
<div class="t" style="left:581.00px;top:463.69px;font-size:11.0px;line-height:11.0px;font-weight:normal;color:#333;transform:scaleX(1.0147)">No</div>
<div class="t" style="left:680.00px;top:463.69px;font-size:11.0px;line-height:11.0px;font-weight:normal;color:#333;transform:scaleX(0.9521)">False</div>
<div class="t" style="left:751.00px;top:463.69px;font-size:11.0px;line-height:11.0px;font-weight:normal;color:#333;transform:scaleX(0.9416)">R 501.61</div>
<div class="t" style="left:836.00px;top:463.69px;font-size:11.0px;line-height:11.0px;font-weight:normal;color:#333;transform:scaleX(0.9416)">R 501.61</div>
<div class="t" style="left:935.00px;top:463.69px;font-size:11.0px;line-height:11.0px;font-weight:normal;color:#333;transform:scaleX(0.9290)">R 0.00</div>
<div class="t" style="left:1035.00px;top:463.69px;font-size:11.0px;line-height:11.0px;font-weight:normal;color:#333;transform:scaleX(0.9290)">R 0.00</div>
<div class="t" style="left:1134.00px;top:463.69px;font-size:11.0px;line-height:11.0px;font-weight:normal;color:#333;transform:scaleX(0.9290)">R 0.00</div>
<div class="t" style="left:1233.00px;top:463.69px;font-size:11.0px;line-height:11.0px;font-weight:normal;color:#333;transform:scaleX(0.9416)">R 501.61</div>
<div class="t" style="left:1332.00px;top:463.69px;font-size:11.0px;line-height:11.0px;font-weight:normal;color:#333;transform:scaleX(0.9416)">R 501.61</div>
<div style="left:11px;top:506px;width:1419px;height:1px;background:#d2d6de;"></div>
<div style="left:11px;top:482px;width:1px;height:25px;background:#d2d6de;"></div>
<div style="left:34px;top:482px;width:1px;height:25px;background:#d2d6de;"></div>
<div style="left:104px;top:482px;width:1px;height:25px;background:#d2d6de;"></div>
<div style="left:204px;top:482px;width:1px;height:25px;background:#d2d6de;"></div>
<div style="left:345px;top:482px;width:1px;height:25px;background:#d2d6de;"></div>
<div style="left:507px;top:482px;width:1px;height:25px;background:#d2d6de;"></div>
<div style="left:578px;top:482px;width:1px;height:25px;background:#d2d6de;"></div>
<div style="left:606px;top:482px;width:1px;height:25px;background:#d2d6de;"></div>
<div style="left:677px;top:482px;width:1px;height:25px;background:#d2d6de;"></div>
<div style="left:748px;top:482px;width:1px;height:25px;background:#d2d6de;"></div>
<div style="left:833px;top:482px;width:1px;height:25px;background:#d2d6de;"></div>
<div style="left:932px;top:482px;width:1px;height:25px;background:#d2d6de;"></div>
<div style="left:1032px;top:482px;width:1px;height:25px;background:#d2d6de;"></div>
<div style="left:1131px;top:482px;width:1px;height:25px;background:#d2d6de;"></div>
<div style="left:1230px;top:482px;width:1px;height:25px;background:#d2d6de;"></div>
<div style="left:1329px;top:482px;width:1px;height:25px;background:#d2d6de;"></div>
<div style="left:1429px;top:482px;width:1px;height:25px;background:#d2d6de;"></div>
<svg style="position:absolute;left:13px;top:483px" width="20" height="20" viewBox="0 0 20 20"><circle cx="9.8" cy="10" r="9.1" fill="#3c8dbc"/><rect x="9" y="6" width="2" height="2" fill="#fff"/><path d="M7.5 10 H11 V13.5 H12.2 V15 H7.5 V13.5 H9 V11.5 H7.5 Z" fill="#fff"/></svg>
<div class="t" style="left:37.00px;top:488.69px;font-size:11.0px;line-height:11.0px;font-weight:normal;color:#333;transform:scaleX(0.9749)">00000133</div>
<div class="t" style="left:107.00px;top:488.69px;font-size:11.0px;line-height:11.0px;font-weight:normal;color:#333;transform:scaleX(0.9806)">2025-01-30</div>
<div class="t" style="left:207.00px;top:488.69px;font-size:11.0px;line-height:11.0px;font-weight:normal;color:#333;transform:scaleX(0.8850)">DR G GROBELAAR</div>
<div class="t" style="left:348.00px;top:488.69px;font-size:11.0px;line-height:11.0px;font-weight:normal;color:#333;transform:scaleX(0.9217)">2 - TIMOTHY TURNER</div>
<div class="t" style="left:581.00px;top:488.69px;font-size:11.0px;line-height:11.0px;font-weight:normal;color:#333;transform:scaleX(1.0147)">No</div>
<div class="t" style="left:680.00px;top:488.69px;font-size:11.0px;line-height:11.0px;font-weight:normal;color:#333;transform:scaleX(0.9521)">False</div>
<div class="t" style="left:751.00px;top:488.69px;font-size:11.0px;line-height:11.0px;font-weight:normal;color:#333;transform:scaleX(0.9416)">R 476.90</div>
<div class="t" style="left:836.00px;top:488.69px;font-size:11.0px;line-height:11.0px;font-weight:normal;color:#333;transform:scaleX(0.9416)">R 476.90</div>
<div class="t" style="left:935.00px;top:488.69px;font-size:11.0px;line-height:11.0px;font-weight:normal;color:#333;transform:scaleX(0.9474)">-R 476.90</div>
<div class="t" style="left:1035.00px;top:488.69px;font-size:11.0px;line-height:11.0px;font-weight:normal;color:#333;transform:scaleX(0.9290)">R 0.00</div>
<div class="t" style="left:1134.00px;top:488.69px;font-size:11.0px;line-height:11.0px;font-weight:normal;color:#333;transform:scaleX(0.9290)">R 0.00</div>
<div class="t" style="left:1233.00px;top:488.69px;font-size:11.0px;line-height:11.0px;font-weight:normal;color:#333;transform:scaleX(0.9290)">R 0.00</div>
<div class="t" style="left:1332.00px;top:488.69px;font-size:11.0px;line-height:11.0px;font-weight:normal;color:#333;transform:scaleX(0.9290)">R 0.00</div>
<div style="left:10px;top:224px;width:1420px;height:114px;background:#ff0000;"></div>
<div style="left:14px;top:228px;width:1412px;height:106px;background:#fff;"></div>
<div style="left:18px;top:232px;width:1404px;height:98px;background:#3c8dbc;"></div>
<div style="left:17px;top:294px;width:1406px;height:36px;background:#3c8dbc;"></div>
<div style="left:17px;top:231px;width:1406px;height:1px;background:#fff;"></div>
<div style="left:17px;top:253px;width:1406px;height:1px;background:#fff;"></div>
<div style="left:17px;top:293px;width:1406px;height:1px;background:#d2d6de;"></div>
<div style="left:17px;top:231px;width:1px;height:23px;background:#fff;"></div>
<div style="left:17px;top:254px;width:1px;height:40px;background:#d2d6de;"></div>
<div style="left:143px;top:231px;width:1px;height:23px;background:#fff;"></div>
<div style="left:143px;top:254px;width:1px;height:40px;background:#d2d6de;"></div>
<div style="left:253px;top:231px;width:1px;height:23px;background:#fff;"></div>
<div style="left:253px;top:254px;width:1px;height:40px;background:#d2d6de;"></div>
<div style="left:362px;top:231px;width:1px;height:23px;background:#fff;"></div>
<div style="left:362px;top:254px;width:1px;height:40px;background:#d2d6de;"></div>
<div style="left:488px;top:231px;width:1px;height:23px;background:#fff;"></div>
<div style="left:488px;top:254px;width:1px;height:40px;background:#d2d6de;"></div>
<div style="left:614px;top:231px;width:1px;height:23px;background:#fff;"></div>
<div style="left:614px;top:254px;width:1px;height:40px;background:#d2d6de;"></div>
<div style="left:739px;top:231px;width:1px;height:23px;background:#fff;"></div>
<div style="left:739px;top:254px;width:1px;height:40px;background:#d2d6de;"></div>
<div style="left:896px;top:231px;width:1px;height:23px;background:#fff;"></div>
<div style="left:896px;top:254px;width:1px;height:40px;background:#d2d6de;"></div>
<div style="left:1053px;top:231px;width:1px;height:23px;background:#fff;"></div>
<div style="left:1053px;top:254px;width:1px;height:40px;background:#d2d6de;"></div>
<div style="left:1179px;top:231px;width:1px;height:23px;background:#fff;"></div>
<div style="left:1179px;top:254px;width:1px;height:40px;background:#d2d6de;"></div>
<div style="left:1336px;top:231px;width:1px;height:23px;background:#fff;"></div>
<div style="left:1336px;top:254px;width:1px;height:40px;background:#d2d6de;"></div>
<div style="left:1422px;top:231px;width:1px;height:23px;background:#fff;"></div>
<div style="left:1422px;top:254px;width:1px;height:40px;background:#d2d6de;"></div>
<div class="t" style="left:20.00px;top:237.69px;font-size:11.0px;line-height:11.0px;font-weight:bold;color:#fff;transform:scaleX(1.0059)">Capture Date</div>
<div class="t" style="left:20.00px;top:259.69px;font-size:11.0px;line-height:11.0px;font-weight:normal;color:#fff;transform:scaleX(0.9725);-webkit-text-stroke:0.25px #fff">2025-09-09 10:36:33</div>
<div class="t" style="left:146.00px;top:237.69px;font-size:11.0px;line-height:11.0px;font-weight:bold;color:#fff;transform:scaleX(0.9750)">Service Date Age</div>
<div class="t" style="left:146.00px;top:259.69px;font-size:11.0px;line-height:11.0px;font-weight:normal;color:#fff;transform:scaleX(0.9777);-webkit-text-stroke:0.25px #fff">72 days</div>
<div class="t" style="left:256.00px;top:237.69px;font-size:11.0px;line-height:11.0px;font-weight:bold;color:#fff;transform:scaleX(0.9967)">Fin Period</div>
<div class="t" style="left:256.00px;top:259.69px;font-size:11.0px;line-height:11.0px;font-weight:normal;color:#fff;transform:scaleX(0.9749);-webkit-text-stroke:0.25px #fff">202607</div>
<div class="t" style="left:365.00px;top:237.69px;font-size:11.0px;line-height:11.0px;font-weight:bold;color:#fff;transform:scaleX(0.9792)">Posted by</div>
<div class="t" style="left:365.00px;top:259.69px;font-size:11.0px;line-height:11.0px;font-weight:normal;color:#fff;transform:scaleX(1.0284);-webkit-text-stroke:0.25px #fff">docspan</div>
<div class="t" style="left:491.00px;top:237.69px;font-size:11.0px;line-height:11.0px;font-weight:bold;color:#fff;transform:scaleX(0.9907)">Last Update User</div>
<div class="t" style="left:491.00px;top:259.69px;font-size:11.0px;line-height:11.0px;font-weight:normal;color:#fff;transform:scaleX(1.0284);-webkit-text-stroke:0.25px #fff">docspan</div>
<div class="t" style="left:617.00px;top:237.69px;font-size:11.0px;line-height:11.0px;font-weight:bold;color:#fff;transform:scaleX(0.9989)">Last Update Date</div>
<div class="t" style="left:617.00px;top:259.69px;font-size:11.0px;line-height:11.0px;font-weight:normal;color:#fff;transform:scaleX(0.9725);-webkit-text-stroke:0.25px #fff">2025-09-09 10:36:33</div>
<div class="t" style="left:742.00px;top:237.69px;font-size:11.0px;line-height:11.0px;font-weight:bold;color:#fff;transform:scaleX(0.9912)">Service Centre Classification</div>
<div class="t" style="left:742.00px;top:259.69px;font-size:11.0px;line-height:11.0px;font-weight:normal;color:#fff;transform:scaleX(1.0373);-webkit-text-stroke:0.25px #fff">Non-Facility</div>
<div class="t" style="left:899.00px;top:237.69px;font-size:11.0px;line-height:11.0px;font-weight:bold;color:#fff;transform:scaleX(0.9964)">Service Centre</div>
<div class="t" style="left:899.00px;top:259.69px;font-size:11.0px;line-height:11.0px;font-weight:normal;color:#fff;transform:scaleX(0.8987);-webkit-text-stroke:0.25px #fff">ROOMS - KAMERS</div>
<div class="t" style="left:1056.00px;top:237.69px;font-size:11.0px;line-height:11.0px;font-weight:bold;color:#fff;transform:scaleX(1.0245)">Referring Practitioner</div>
<div class="t" style="left:1182.00px;top:237.69px;font-size:11.0px;line-height:11.0px;font-weight:bold;color:#fff;transform:scaleX(0.9872)">Price List Collection</div>
<div class="t" style="left:1182.00px;top:259.69px;font-size:11.0px;line-height:11.0px;font-weight:normal;color:#fff;transform:scaleX(0.9123);-webkit-text-stroke:0.25px #fff">MP 014 GENERAL</div>
<div class="t" style="left:1339.00px;top:237.69px;font-size:11.0px;line-height:11.0px;font-weight:bold;color:#fff;transform:scaleX(1.0171)">Authorisation</div>
<div class="t" style="left:1182.00px;top:277.99px;font-size:11.0px;line-height:11.0px;font-weight:normal;color:#fff;transform:scaleX(0.9118);-webkit-text-stroke:0.25px #fff">PRACTITIONER</div>
<div style="left:126px;top:297px;width:120px;height:30px;background:#fff;border-radius:4px 4px 0 0;"></div>
<div class="t" style="left:35.30px;top:306.09px;font-size:11.0px;line-height:11.0px;font-weight:bold;color:#fff;transform:scaleX(0.9822)">Invoice Lines</div>
<div class="t" style="left:141.90px;top:306.09px;font-size:11.0px;line-height:11.0px;font-weight:bold;color:#111;transform:scaleX(0.9798)">Switch Response</div>
<div class="t" style="left:268.80px;top:306.09px;font-size:11.0px;line-height:11.0px;font-weight:bold;color:#fff;transform:scaleX(0.9698)">Actions</div>
<div class="t" style="left:346.30px;top:306.09px;font-size:11.0px;line-height:11.0px;font-weight:bold;color:#fff;transform:scaleX(0.9807)">Invoice Receipts</div>
<div style="left:601px;top:527px;width:36px;height:32px;background:#fff;box-sizing:border-box;border:1px solid #cfcfcf;border-radius:4px;"></div>
<div style="left:642px;top:527px;width:34px;height:32px;background:#3c8dbc;box-sizing:border-box;border:1px solid #3c8dbc;border-radius:4px;"></div>
<div style="left:681px;top:527px;width:36px;height:32px;background:#fff;box-sizing:border-box;border:1px solid #cfcfcf;border-radius:4px;"></div>
<div style="left:721px;top:527px;width:36px;height:32px;background:#fff;box-sizing:border-box;border:1px solid #cfcfcf;border-radius:4px;"></div>
<div style="left:761px;top:527px;width:78px;height:32px;background:#fff;box-sizing:border-box;border:1px solid #cfcfcf;border-radius:4px;"></div>
<svg style="position:absolute;left:613px;top:535.5px" width="12" height="14" viewBox="0 0 12 14"><path d="M8 2 L3.5 7 L8 12" fill="none" stroke="#222" stroke-width="1.5"/></svg>
<svg style="position:absolute;left:733px;top:535.5px" width="12" height="14" viewBox="0 0 12 14"><path d="M4 2 L8.5 7 L4 12" fill="none" stroke="#222" stroke-width="1.5"/></svg>
<div class="t" style="left:655.50px;top:537.69px;font-size:11.0px;line-height:11.0px;font-weight:normal;color:#fff;transform:scaleX(0.9749);-webkit-text-stroke:0.25px #fff">1</div>
<div class="t" style="left:696.00px;top:537.69px;font-size:11.0px;line-height:11.0px;font-weight:normal;color:#333;transform:scaleX(0.9749)">2</div>
<div class="t" style="left:771.30px;top:539.19px;font-size:11.0px;line-height:11.0px;font-weight:normal;color:#333;transform:scaleX(1.0011)">Items: 10</div>
<svg style="position:absolute;left:824px;top:538.5px" width="12" height="9" viewBox="0 0 12 9"><path d="M2 2 L6 6 L10 2" fill="none" stroke="#222" stroke-width="2"/></svg>
</body></html>
